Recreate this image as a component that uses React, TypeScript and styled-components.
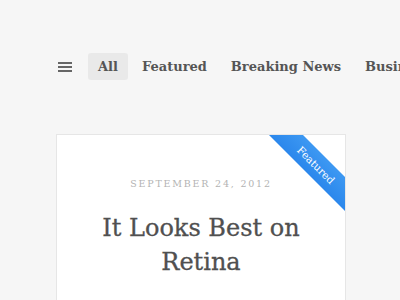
import React from "react";
import styled, { createGlobalStyle } from "styled-components";

const Global = createGlobalStyle`
  html, body { margin: 0; padding: 0; background: #f6f6f6; }
  body { font-family: "DejaVu Serif", "Liberation Serif", serif; overflow: hidden; width: 400px; height: 300px; }
`;

const Page = styled.div`
  width: 400px;
  height: 300px;
  overflow: hidden;
  display: flex;
  flex-direction: column;
`;

const Nav = styled.nav`
  display: flex;
  align-items: center;
  height: 27px;
  margin-top: 53px;
  padding-left: 58px;
  white-space: nowrap;
`;

const Burger = styled.span`
  flex-shrink: 0;
  display: flex;
  flex-direction: column;
  gap: 2px;
  width: 14px;
  margin-right: 16px;
  & > i {
    display: block;
    height: 2px;
    background: #666;
  }
`;

const NavItem = styled.a<{ $active?: boolean }>`
  flex-shrink: 0;
  display: flex;
  align-items: center;
  height: 27px;
  padding: 0 10px;
  margin-right: 4px;
  border-radius: 3px;
  background: ${(p) => (p.$active ? "#e9e9e9" : "transparent")};
  color: #555;
  font-size: 13px;
  font-weight: bold;
  text-decoration: none;
`;

const Card = styled.article`
  position: relative;
  overflow: hidden;
  margin: 54px 0 0 56px;
  width: 290px;
  flex: 1;
  background: #fff;
  border: 1px solid #e6e6e6;
  border-bottom: none;
  box-sizing: border-box;
  display: flex;
  flex-direction: column;
  align-items: center;
`;

const Ribbon = styled.div`
  position: absolute;
  top: 18px;
  right: -31px;
  width: 120px;
  height: 24px;
  transform: rotate(45deg);
  background: linear-gradient(#3d98f2, #2b87ec);
  color: #fff;
  font-size: 10.5px;
  display: flex;
  align-items: center;
  justify-content: center;
`;

const DateLine = styled.div`
  margin-top: 43px;
  font-size: 9.5px;
  letter-spacing: 1.8px;
  color: #b3b3b3;
`;

const Title = styled.h1`
  margin: 22px 0 0;
  font-size: 24px;
  line-height: 34px;
  font-weight: normal;
  color: #505050;
  text-align: center;
  width: 230px;
  -webkit-text-stroke: 0.3px #505050;
`;

export default function App() {
  return (
    <Page>
      <Global />
      <Nav>
        <Burger>
          <i />
          <i />
          <i />
        </Burger>
        <NavItem $active>All</NavItem>
        <NavItem>Featured</NavItem>
        <NavItem>Breaking News</NavItem>
        <NavItem>Business</NavItem>
      </Nav>
      <Card>
        <Ribbon>Featured</Ribbon>
        <DateLine>SEPTEMBER 24, 2012</DateLine>
        <Title>It Looks Best on Retina</Title>
      </Card>
    </Page>
  );
}
